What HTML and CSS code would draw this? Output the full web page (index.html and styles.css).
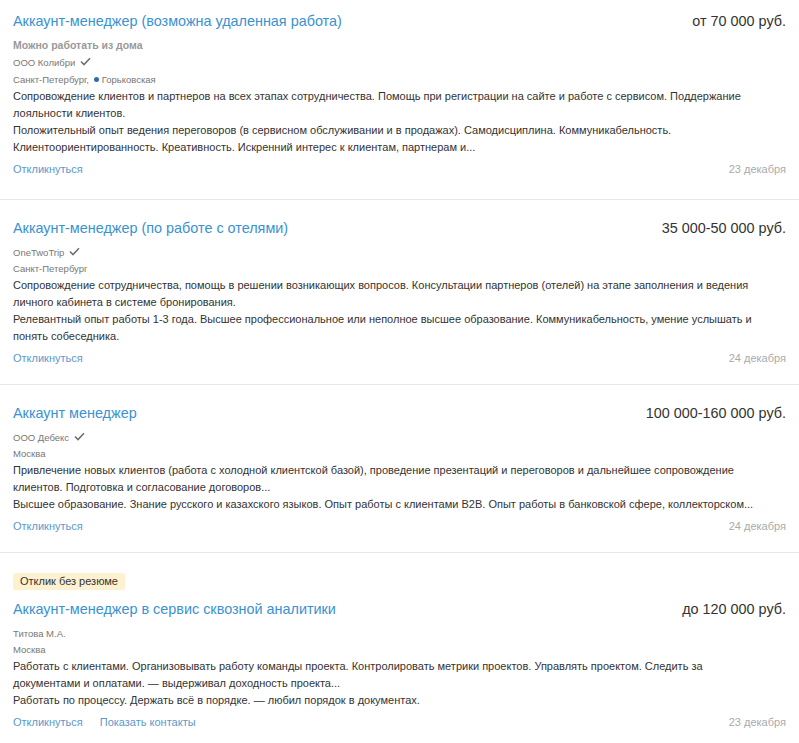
FILE: index.html
```html
<!DOCTYPE html>
<html lang="ru">
<head>
  <meta charset="UTF-8" />
  <meta name="viewport" content="width=device-width, initial-scale=1.0"/>
  <title>Вакансии</title>
  <link rel="stylesheet" href="styles.css">
</head>
<body>
  <div class="vacancy-list">

    <div class="vacancy vacancy-first">
      <div class="vacancy-head">
        <a class="vacancy-title" href="#">Аккаунт-менеджер (возможна удаленная работа)</a>
        <span class="vacancy-salary">от 70 000 руб.</span>
      </div>
      <div class="vacancy-note">Можно работать из дома</div>
      <div class="vacancy-meta">ООО Колибри <svg class="check" width="11" height="9" viewBox="0 0 11 9"><polyline points="1,4.5 4,7.5 10,1.2" /></svg></div>
      <div class="vacancy-meta">Санкт-Петербург, <span class="metro"></span>Горьковская</div>
      <div class="vacancy-desc">
        Сопровождение клиентов и партнеров на всех этапах сотрудничества. Помощь при регистрации на сайте и работе с сервисом. Поддержание лояльности клиентов.<br>
        Положительный опыт ведения переговоров (в сервисном обслуживании и в продажах). Самодисциплина. Коммуникабельность. Клиентоориентированность. Креативность. Искренний интерес к клиентам, партнерам и...
      </div>
      <div class="vacancy-foot">
        <div class="vacancy-actions"><a href="#">Откликнуться</a></div>
        <span class="vacancy-date">23 декабря</span>
      </div>
    </div>

    <div class="vacancy">
      <div class="vacancy-head">
        <a class="vacancy-title" href="#">Аккаунт-менеджер (по работе с отелями)</a>
        <span class="vacancy-salary">35 000-50 000 руб.</span>
      </div>
      <div class="vacancy-meta first">OneTwoTrip <svg class="check" width="11" height="9" viewBox="0 0 11 9"><polyline points="1,4.5 4,7.5 10,1.2" /></svg></div>
      <div class="vacancy-meta">Санкт-Петербург</div>
      <div class="vacancy-desc">
        Сопровождение сотрудничества, помощь в решении возникающих вопросов. Консультации партнеров (отелей) на этапе заполнения и ведения личного кабинета в системе бронирования.<br>
        Релевантный опыт работы 1-3 года. Высшее профессиональное или неполное высшее образование. Коммуникабельность, умение услышать и понять собеседника.
      </div>
      <div class="vacancy-foot">
        <div class="vacancy-actions"><a href="#">Откликнуться</a></div>
        <span class="vacancy-date">24 декабря</span>
      </div>
    </div>

    <div class="vacancy">
      <div class="vacancy-head">
        <a class="vacancy-title" href="#">Аккаунт менеджер</a>
        <span class="vacancy-salary">100 000-160 000 руб.</span>
      </div>
      <div class="vacancy-meta first">ООО Дебекс <svg class="check" width="11" height="9" viewBox="0 0 11 9"><polyline points="1,4.5 4,7.5 10,1.2" /></svg></div>
      <div class="vacancy-meta">Москва</div>
      <div class="vacancy-desc">
        Привлечение новых клиентов (работа с холодной клиентской базой), проведение презентаций и переговоров и дальнейшее сопровождение клиентов. Подготовка и согласование договоров...<br>
        Высшее образование. Знание русского и казахского языков. Опыт работы с клиентами B2B. Опыт работы в банковской сфере, коллекторском...
      </div>
      <div class="vacancy-foot">
        <div class="vacancy-actions"><a href="#">Откликнуться</a></div>
        <span class="vacancy-date">24 декабря</span>
      </div>
    </div>

    <div class="vacancy">
      <span class="badge">Отклик без резюме</span>
      <div class="vacancy-head">
        <a class="vacancy-title" href="#">Аккаунт-менеджер в сервис сквозной аналитики</a>
        <span class="vacancy-salary">до 120 000 руб.</span>
      </div>
      <div class="vacancy-meta first">Титова М.А.</div>
      <div class="vacancy-meta">Москва</div>
      <div class="vacancy-desc">
        Работать с клиентами. Организовывать работу команды проекта. Контролировать метрики проектов. Управлять проектом. Следить за<br>
        документами и оплатами. — выдерживал доходность проекта...<br>
        Работать по процессу. Держать всё в порядке. — любил порядок в документах.
      </div>
      <div class="vacancy-foot">
        <div class="vacancy-actions"><a href="#">Откликнуться</a><a href="#">Показать контакты</a></div>
        <span class="vacancy-date">23 декабря</span>
      </div>
    </div>

  </div>
</body>
</html>
```

FILE: styles.css
```css
body {
  margin: 0;
  font-family: "Liberation Sans", Arial, sans-serif;
  background-color: #fff;
  color: #333;
}
a {
  text-decoration: none;
}
.vacancy {
  padding: 18px 13px 18px;
  border-bottom: 1px solid #e6e6e6;
}
.vacancy:last-child {
  border-bottom: none;
}
.vacancy-first {
  padding-top: 11px;
  padding-bottom: 22px;
}
.vacancy-head {
  display: flex;
  justify-content: space-between;
  align-items: baseline;
  line-height: 20px;
}
.vacancy-title {
  font-size: 14.4px;
  color: #3a92d2;
}
.vacancy-salary {
  font-size: 14.4px;
  color: #333;
}
.vacancy-note {
  margin-top: 5px;
  font-size: 10.5px;
  font-weight: bold;
  line-height: 18px;
  color: #999;
}
.vacancy-meta {
  font-size: 9.5px;
  line-height: 17px;
  color: #777;
}
.vacancy-meta.first {
  margin-top: 7px;
  line-height: 16px;
}
.vacancy-meta.first + .vacancy-meta {
  line-height: 16px;
}
.check {
  vertical-align: 0;
  margin-left: 2px;
}
.check polyline {
  fill: none;
  stroke: #6f6f6f;
  stroke-width: 1.6;
}
.metro {
  display: inline-block;
  width: 5px;
  height: 5px;
  margin: 0 3px 1px 2px;
  border-radius: 50%;
  background-color: #2d6da8;
}
.vacancy-desc {
  font-size: 11px;
  line-height: 17px;
  color: #333;
}
.vacancy-foot {
  display: flex;
  justify-content: space-between;
  align-items: baseline;
  margin-top: 5px;
  line-height: 16px;
}
.vacancy-actions {
  display: flex;
  gap: 17px;
}
.vacancy-actions a {
  font-size: 11px;
  color: #5d98cb;
}
.vacancy-date {
  font-size: 11px;
  color: #aaa;
}
.badge {
  display: inline-block;
  margin-bottom: 9px;
  padding: 0 7px;
  font-size: 11px;
  line-height: 17px;
  color: #333;
  background-color: #fdf1cf;
  border-radius: 2px;
}
```
